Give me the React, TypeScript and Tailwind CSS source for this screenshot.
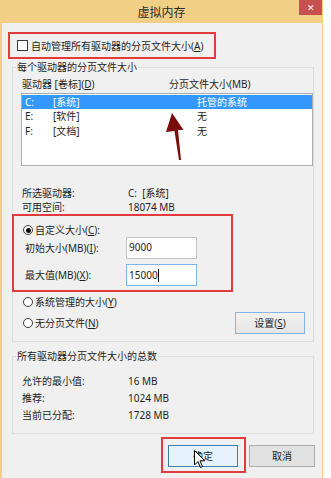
import React from "react";

function U({ c }: { c: string }) {
  return <span className="underline underline-offset-[1px] decoration-[1px]">{c}</span>;
}

function Radio({ checked }: { checked?: boolean }) {
  return (
    <span className="w-[10px] h-[10px] rounded-full border border-[#3a3a3a] bg-white flex items-center justify-center shrink-0">
      {checked && <span className="w-[5px] h-[5px] rounded-full bg-[#111]" />}
    </span>
  );
}

export default function App() {
  return (
    <div className="relative w-[331px] h-[478px] bg-white overflow-hidden font-['Noto_Sans','Noto_Sans_CJK_SC',sans-serif] text-[10px] leading-[14px] text-[#1e1e1e]">
      <div className="w-[323px] h-[478px] flex flex-col bg-[#f1cf85]">
        {/* Title bar */}
        <div className="h-[23px] shrink-0 grid grid-cols-[1fr_auto_1fr] items-start">
          <div />
          <span className="text-[12px] leading-[16px] text-[#2a2a2a] mt-[5px]">虚拟内存</span>
          <div className="justify-self-end mr-[1px] w-[23px] h-[15px] bg-[#c75050] flex items-center justify-center text-white text-[9px] leading-[9px]">
            ✕
          </div>
        </div>

        {/* Body */}
        <div className="flex-1 ml-[2px] mr-[1px] bg-[#f0f0f0] flex flex-col">
          {/* Red box 1 */}
          <div className="mt-[9px] ml-[6px] w-[208px] h-[27px] border-2 border-[#e33b3b] flex items-center pl-[7px] gap-[3px]">
            <span className="w-[11px] h-[11px] border border-[#3a3a3a] bg-white shrink-0" />
            <span>
              自动管理所有驱动器的分页文件大小(<U c="A" />)
            </span>
          </div>

          {/* Group 1 */}
          <fieldset className="mt-[2px] ml-[10px] w-[302px] border border-[#dcdcdc]">
            <legend className="ml-[3px] px-[1px] leading-[12px]">每个驱动器的分页文件大小</legend>
            <div className="flex flex-col">
              <div className="mt-[4px] pl-[9px] flex h-[14px]">
                <span className="w-[147px]">
                  驱动器 [卷标](<U c="D" />)
                </span>
                <span>分页文件大小(MB)</span>
              </div>
              <div className="mt-[2px] ml-[8px] w-[292px] h-[73px] border border-[#adadad] bg-white pt-[1px]">
                <div className="h-[14px] flex items-center pl-[3px] bg-[#3399ff] text-white">
                  <span className="w-[28px]">C:</span>
                  <span className="w-[144px]">[系统]</span>
                  <span>托管的系统</span>
                </div>
                <div className="h-[14.5px] flex items-center pl-[3px]">
                  <span className="w-[28px]">E:</span>
                  <span className="w-[144px]">[软件]</span>
                  <span>无</span>
                </div>
                <div className="h-[14.5px] flex items-center pl-[3px]">
                  <span className="w-[28px]">F:</span>
                  <span className="w-[144px]">[文档]</span>
                  <span>无</span>
                </div>
              </div>

              <div className="mt-[20px] pl-[9px] flex h-[14px]">
                <span className="w-[106px]">所选驱动器:</span>
                <span>C:&nbsp; [系统]</span>
              </div>
              <div className="pl-[9px] flex h-[14px]">
                <span className="w-[106px]">可用空间:</span>
                <span>18074 MB</span>
              </div>

              {/* Red box 2 */}
              <div className="ml-[-1px] w-[221px] border-2 border-[#e33b3b] pt-[7px] pb-[4px] flex flex-col">
                <div className="h-[14px] pl-[9px] flex items-center gap-[2px]">
                  <Radio checked />
                  <span>
                    自定义大小(<U c="C" />):
                  </span>
                </div>
                <div className="h-[22px] pl-[11px] flex items-center">
                  <span className="w-[101px]">
                    初始大小(MB)(<U c="I" />):
                  </span>
                  <div className="w-[71px] h-[22px] border border-[#c5c5c5] bg-white pl-[2px] pt-[2px] leading-[14px]">
                    9000
                  </div>
                </div>
                <div className="mt-[5px] h-[22px] pl-[11px] flex items-center">
                  <span className="w-[101px]">
                    最大值(MB)(<U c="X" />):
                  </span>
                  <div className="w-[71px] h-[22px] border border-[#7eb4ea] bg-white pl-[2px] pt-[3px] leading-[14px] flex items-start">
                    <span>15000</span>
                    <span className="w-[1px] h-[13px] bg-black mt-[1px]" />
                  </div>
                </div>
              </div>

              <div className="mt-[3px] h-[14px] pl-[10px] flex items-center gap-[2px]">
                <Radio />
                <span>
                  系统管理的大小(<U c="Y" />)
                </span>
              </div>
              <div className="mt-[3px] h-[22px] pl-[10px] flex items-center gap-[2px]">
                <Radio />
                <span>
                  无分页文件(<U c="N" />)
                </span>
                <div className="ml-auto mr-[8px] w-[70px] h-[22px] border border-[#7eb4ea] bg-gradient-to-b from-[#f2f2f2] to-[#e5e5e5] flex items-center justify-center">
                  <span>
                    设置(<U c="S" />)
                  </span>
                </div>
              </div>
              <div className="h-[7px]" />
            </div>
          </fieldset>

          {/* Group 2 */}
          <fieldset className="mt-[8px] ml-[10px] w-[302px] border border-[#dcdcdc]">
            <legend className="ml-[3px] px-[1px] leading-[12px]">所有驱动器分页文件大小的总数</legend>
            <div className="pt-[10px] pb-[10px] pl-[9px] flex flex-col">
              <div className="h-[17px] flex items-center">
                <span className="w-[106px]">允许的最小值:</span>
                <span>16 MB</span>
              </div>
              <div className="h-[17px] flex items-center">
                <span className="w-[106px]">推荐:</span>
                <span>1024 MB</span>
              </div>
              <div className="h-[17px] flex items-center">
                <span className="w-[106px]">当前已分配:</span>
                <span>1728 MB</span>
              </div>
            </div>
          </fieldset>

          {/* Buttons */}
          <div className="mt-[3px] flex items-start">
            <div className="ml-[159px] border-2 border-[#e33b3b] pt-[6px] pb-[4px] pl-[5px] pr-[6px]">
              <div className="w-[70px] h-[22px] border border-[#3c7fb1] bg-[#e5f1fb] flex items-center justify-center">
                确定
              </div>
            </div>
            <div className="ml-[3px] mt-[8px] w-[66px] h-[22px] border border-[#adadad] bg-[#e1e1e1] flex items-center justify-center">
              取消
            </div>
          </div>
        </div>
      </div>

      {/* Annotation arrow */}
      <svg className="absolute left-0 top-0 pointer-events-none" width="331" height="478" viewBox="0 0 331 478">
        <polygon
          points="172,113 183.5,130 178,130 181,160 179,160 174.5,131 166,132"
          fill="#7a0c0c"
        />
      </svg>

      {/* Mouse cursor */}
      <svg className="absolute left-[194px] top-[450px] pointer-events-none" width="12" height="19" viewBox="0 0 12 19">
        <path d="M0.5 0.5 L0.5 15 L4 11.5 L6.5 17.5 L8.5 16.6 L6 10.8 L10.8 10.8 Z" fill="#fff" stroke="#000" strokeWidth="1" strokeLinejoin="round" />
      </svg>
    </div>
  );
}
